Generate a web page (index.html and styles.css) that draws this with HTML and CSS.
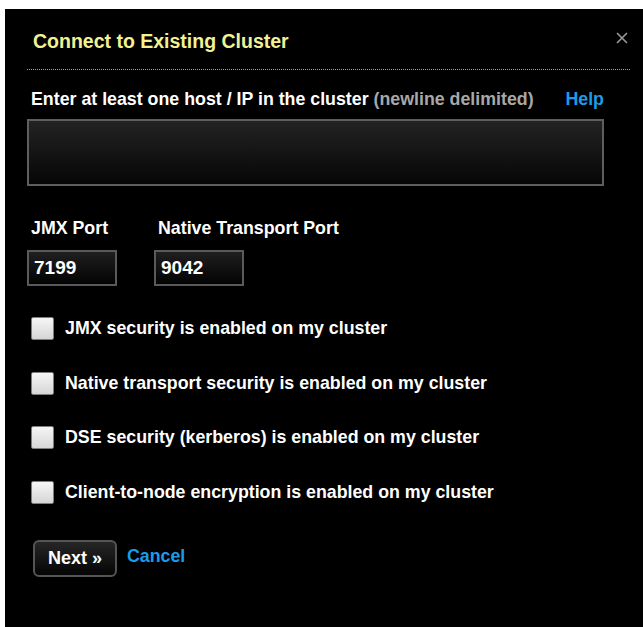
FILE: index.html
```html
<!DOCTYPE html>
<html lang="en">
<head>
<meta charset="utf-8">
<title>Connect to Existing Cluster</title>
<link rel="stylesheet" href="styles.css">
</head>
<body>
<div class="dialog">
  <div class="dialog-header">
    <h2 class="dialog-title">Connect to Existing Cluster</h2>
    <span class="close" aria-label="Close">
      <svg width="12" height="12" viewBox="0 0 12 12"><path d="M1 1L11 11M11 1L1 11" stroke="#9a9a9a" stroke-width="1.6" fill="none"/></svg>
    </span>
  </div>

  <div class="hosts-label">
    <span>Enter at least one host / IP in the cluster <span class="muted">(newline delimited)</span></span>
    <a class="link help">Help</a>
  </div>
  <textarea class="hosts"></textarea>

  <div class="ports">
    <div class="port">
      <label class="port-label">JMX Port</label>
      <input class="port-input" type="text" value="7199">
    </div>
    <div class="port">
      <label class="port-label">Native Transport Port</label>
      <input class="port-input" type="text" value="9042">
    </div>
  </div>

  <div class="options">
    <label class="option"><span class="check"></span>JMX security is enabled on my cluster</label>
    <label class="option"><span class="check"></span>Native transport security is enabled on my cluster</label>
    <label class="option"><span class="check"></span>DSE security (kerberos) is enabled on my cluster</label>
    <label class="option"><span class="check"></span>Client-to-node encryption is enabled on my cluster</label>
  </div>

  <div class="actions">
    <button class="btn">Next &raquo;</button>
    <a class="link cancel">Cancel</a>
  </div>
</div>
</body>
</html>
```

FILE: styles.css
```css
html, body {
  margin: 0;
  padding: 0;
  background: #fff;
  height: 100%;
}

body {
  font-family: "Liberation Sans", Arial, Helvetica, sans-serif;
  font-size: 17.8px;
  font-weight: bold;
  color: #fff;
  overflow: hidden;
}

.dialog {
  margin: 9px 0 0 5px;
  background: #000;
  height: 618px;
  padding: 0 13px 0 22px;
  box-sizing: border-box;
}

/* header with title and close cross */
.dialog-header {
  display: flex;
  justify-content: space-between;
  align-items: center;
  height: 61px;
  box-sizing: border-box;
  padding: 5px 2px 0 6px;
  border-bottom: 1px dotted #a0a0a0;
}

.dialog-title {
  margin: 0;
  font-size: 19.5px;
  font-weight: bold;
  color: #f2f294;
}

.close {
  display: flex;
  margin-top: -7px;
}

.link {
  color: #1c9ce8;
  cursor: pointer;
}

.hosts-label {
  display: flex;
  justify-content: space-between;
  align-items: center;
  padding: 10px 26px 0 4px;
  height: 49px;
  box-sizing: border-box;
}

.muted {
  color: #a8a8a8;
}

.hosts {
  display: block;
  width: 577px;
  height: 67px;
  box-sizing: border-box;
  margin: 0;
  border: 2px solid #5e5e5e;
  background: linear-gradient(#232323, #060606);
  resize: none;
  outline: none;
}

.ports {
  display: flex;
  gap: 37px;
  margin-top: 30px;
}

.port {
  display: flex;
  flex-direction: column;
}

.port-label {
  padding-left: 4px;
  line-height: 24px;
  margin-bottom: 10px;
}

.port-input {
  width: 90px;
  height: 36px;
  box-sizing: border-box;
  margin: 0;
  border: 2px solid #5a5a5a;
  background: linear-gradient(#1f1f1f, #030303);
  color: #fff;
  font-family: inherit;
  font-size: 19px;
  font-weight: bold;
  padding: 0 0 0 5px;
  outline: none;
}

.options {
  display: flex;
  flex-direction: column;
  gap: 31.5px;
  margin-top: 31px;
  padding-left: 4px;
}

.option {
  display: flex;
  align-items: center;
  gap: 11px;
  height: 23px;
}

.check {
  width: 23px;
  height: 23px;
  box-sizing: border-box;
  border: 1px solid #7e7e7e;
  border-radius: 2px;
  background: linear-gradient(#f6f6f6, #d6d6d6);
  flex: none;
}

.actions {
  display: flex;
  align-items: center;
  gap: 10px;
  margin-top: 36px;
  padding-left: 6px;
}

.btn {
  height: 37px;
  width: 84px;
  padding: 0;
  border: 2px solid #555;
  border-radius: 6px;
  background: linear-gradient(#262626, #050505);
  color: #fff;
  font-family: inherit;
  font-size: 18px;
  font-weight: bold;
}

.cancel {
  margin-top: -3px;
}
```
